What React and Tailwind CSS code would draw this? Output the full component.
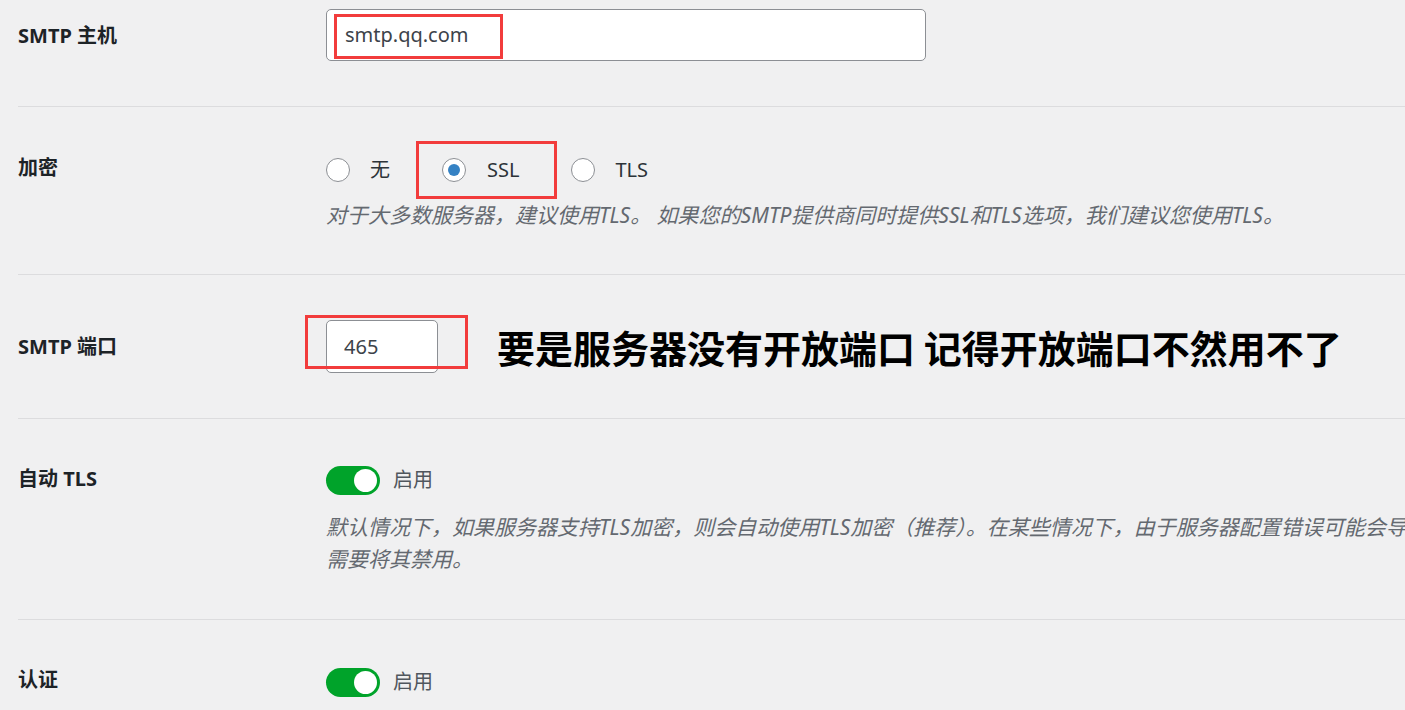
import React from "react";

const FONT = { fontFamily: '"Noto Sans", "Noto Sans CJK SC", sans-serif' };

function Radio({ checked }) {
  return (
    <span className="w-[24px] h-[24px] rounded-full border border-[#8c8f94] bg-white flex items-center justify-center shrink-0">
      {checked ? <span className="w-[12px] h-[12px] rounded-full bg-[#3582c4]" /> : null}
    </span>
  );
}

function Toggle() {
  return (
    <span className="w-[54px] h-[29px] rounded-full bg-[#00a32a] flex items-center justify-end pr-[3px] shrink-0">
      <span className="w-[23px] h-[23px] rounded-full bg-white" />
    </span>
  );
}

function RedBox({ className }) {
  return <div className={"absolute border-[3px] border-[#f23c3c] pointer-events-none " + className} />;
}

function Label({ children, top }) {
  return (
    <div className={"w-[308px] shrink-0 text-[20px] leading-[30px] font-bold text-[#1d2327] " + top}>{children}</div>
  );
}

export default function App() {
  return (
    <div className="w-[1405px] h-[710px] overflow-hidden bg-[#f0f0f1] relative" style={FONT}>
      <div className="pl-[18px] w-[1600px]">
        {/* Row 1 */}
        <div className="flex border-b border-[#dcdcde] h-[107px]">
          <Label top="pt-[21px]">SMTP 主机</Label>
          <div className="pt-[9px] relative">
            <div className="w-[600px] h-[52px] bg-white border border-[#8c8f94] rounded-[5px] flex items-center pl-[18px] text-[20px] text-[#3c434a]">
              smtp.qq.com
            </div>
            <RedBox className="left-[8px] top-[14px] w-[169px] h-[45px]" />
          </div>
        </div>

        {/* Row 2 */}
        <div className="flex border-b border-[#dcdcde] h-[168px]">
          <Label top="pt-[46px]">加密</Label>
          <div className="pt-[48px] relative">
            <div className="flex items-center h-[30px] text-[20px] text-[#2c3338]">
              <Radio />
              <span className="ml-[20px]">无</span>
              <span className="ml-[52px] flex items-center">
                <Radio checked />
                <span className="ml-[21px]">SSL</span>
              </span>
              <span className="ml-[52px] flex items-center">
                <Radio />
                <span className="ml-[20px]">TLS</span>
              </span>
            </div>
            <div className="mt-[14px] text-[21px] leading-[32px] italic text-[#646970] whitespace-nowrap">
              对于大多数服务器，建议使用TLS。 如果您的SMTP提供商同时提供SSL和TLS选项，我们建议您使用TLS。
            </div>
            <RedBox className="left-[90px] top-[34px] w-[141px] h-[58px]" />
          </div>
        </div>

        {/* Row 3 */}
        <div className="flex border-b border-[#dcdcde] h-[144px]">
          <Label top="pt-[57px]">SMTP 端口</Label>
          <div className="pt-[45px] relative flex items-start">
            <div className="w-[112px] h-[53px] bg-white border border-[#8c8f94] rounded-[5px] flex items-center pl-[17px] text-[20px] text-[#3c434a]">
              465
            </div>
            <div
              className="ml-[59px] h-[53px] flex items-center text-[38px] font-bold text-black"
              style={{ fontFamily: '"Noto Sans CJK SC", sans-serif' }}
            >
              要是服务器没有开放端口 记得开放端口不然用不了
            </div>
            <RedBox className="-left-[21px] top-[40px] w-[163px] h-[54px]" />
          </div>
        </div>

        {/* Row 4 */}
        <div className="flex border-b border-[#dcdcde] h-[201px]">
          <Label top="pt-[45px]">自动 TLS</Label>
          <div className="pt-[46px]">
            <div className="flex items-center h-[30px]">
              <Toggle />
              <span className="ml-[13px] text-[20px] text-[#50575e]">启用</span>
            </div>
            <div className="mt-[16px] text-[21px] leading-[32px] italic text-[#646970] whitespace-nowrap">
              <div>默认情况下，如果服务器支持TLS加密，则会自动使用TLS加密（推荐）。在某些情况下，由于服务器配置错误可能会导致问题，因此</div>
              <div>需要将其禁用。</div>
            </div>
          </div>
        </div>

        {/* Row 5 */}
        <div className="flex h-[120px]">
          <Label top="pt-[45px]">认证</Label>
          <div className="pt-[47px]">
            <div className="flex items-center h-[30px]">
              <Toggle />
              <span className="ml-[13px] text-[20px] text-[#50575e]">启用</span>
            </div>
          </div>
        </div>
      </div>
    </div>
  );
}
